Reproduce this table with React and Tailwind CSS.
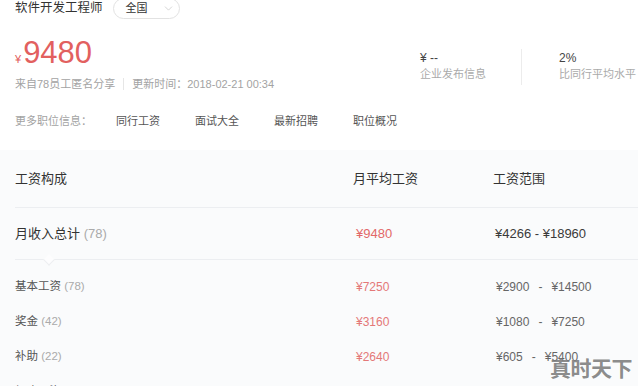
import React from 'react';
import { ChevronDown } from 'lucide-react';

// 工资明细
const details = [
  { label: '基本工资', count: 78, avg: '¥7250', min: '¥2900', max: '¥14500' },
  { label: '奖金', count: 42, avg: '¥3160', min: '¥1080', max: '¥7250' },
  { label: '补助', count: 22, avg: '¥2640', min: '¥605', max: '¥5400' },
  { label: '加班工资', count: 12, avg: '¥1860', min: '¥300', max: '¥4200' },
];

const links = ['同行工资', '面试大全', '最新招聘', '职位概况'];

export default function App() {
  return (
    <div className="relative w-[640px] h-[386px] overflow-hidden bg-white font-['Liberation_Sans','Noto_Sans_CJK_SC',sans-serif]">
      {/* 顶部信息 */}
      <div className="pl-[15px]">
        <div className="flex items-center h-[17px]">
          <span className="text-[12.5px] text-[#333]">软件开发工程师</span>
          <div className="ml-[10px] flex items-center h-[21px] w-[67px] border border-[#e2e2e2] rounded-full pl-[12px]">
            <span className="text-[11px] text-[#333]">全国</span>
            <ChevronDown size={13} strokeWidth={1.3} className="ml-[14px] text-[#c4c4c4]" />
          </div>
        </div>

        <div className="flex mt-[18px]">
          <div className="w-[405px]">
            <div className="flex items-baseline h-[36px] text-[#e2605f]">
              <span className="text-[11px] mr-[2px]">¥</span>
              <span className="text-[31px] leading-[36px]">9480</span>
            </div>
            <div className="flex items-center mt-[5px] h-[16px] text-[11px] text-[#a3a3a3]">
              <span>来自78员工匿名分享</span>
              <span className="mx-[8px] h-[12px] border-l border-[#e6e6e6]"></span>
              <span>更新时间：2018-02-21 00:34</span>
            </div>
          </div>
          <div className="flex mt-[14px] h-[36px]">
            <div className="w-[101px] pt-[1px]">
              <div className="text-[12px] leading-[16px] text-[#444]">¥ --</div>
              <div className="text-[11px] leading-[16px] text-[#aaa]">企业发布信息</div>
            </div>
            <div className="border-l border-[#ececec]"></div>
            <div className="pl-[37px] pt-[1px]">
              <div className="text-[12px] leading-[16px] text-[#444]">2%</div>
              <div className="text-[11px] leading-[16px] text-[#aaa] whitespace-nowrap">比同行平均水平</div>
            </div>
          </div>
        </div>

        <div className="flex items-center mt-[21px] h-[16px] text-[11px]">
          <span className="w-[101px] text-[#a3a3a3]">更多职位信息：</span>
          {links.map((l) => (
            <span key={l} className="w-[79px] text-[#555]">{l}</span>
          ))}
        </div>
      </div>

      {/* 工资构成 */}
      <div className="mt-[21px] w-[638px] h-[300px] bg-[#fafbfc] pl-[15px]">
        <div className="grid grid-cols-[338px_140px_1fr] items-center h-[58px] border-b border-[#eceef1] text-[13px] text-[#333]">
          <span>工资构成</span>
          <span>月平均工资</span>
          <span>工资范围</span>
        </div>
        <div className="relative grid grid-cols-[338px_140px_1fr] items-center h-[52px] border-b border-[#eceef1] text-[13px]">
          <span className="text-[#333]">
            月收入总计 <span className="text-[#aaa]">(78)</span>
          </span>
          <span className="pl-[3px] text-[#e26868]">¥9480</span>
          <span className="pl-[2px] text-[#3a3a3a]">¥4266 - ¥18960</span>
          <div className="absolute left-[30px] bottom-[-5px] w-[8px] h-[8px] rotate-45 bg-[#fdfdfe] border-r border-b border-[#eceef1]"></div>
        </div>
        <div className="pt-[9px]">
          {details.map((d) => (
            <div key={d.label} className="grid grid-cols-[338px_140px_1fr] items-center h-[35px] text-[12px]">
              <span className="text-[11.5px] text-[#555]">
                {d.label} <span className="text-[#aaa]">({d.count})</span>
              </span>
              <span className="pl-[3px] text-[#e47878]">{d.avg}</span>
              <span className="pl-[3px] flex gap-[9px] text-[#666]">
                <span>{d.min}</span>
                <span>-</span>
                <span>{d.max}</span>
              </span>
            </div>
          ))}
        </div>
      </div>

      {/* 水印 */}
      <div className="absolute right-[8px] bottom-[7px] text-[21px] leading-[24px] font-bold tracking-[-0.5px] text-[#7d7d7d]/90 font-['Noto_Sans_CJK_SC',sans-serif]">
        真时天下
      </div>
    </div>
  );
}
